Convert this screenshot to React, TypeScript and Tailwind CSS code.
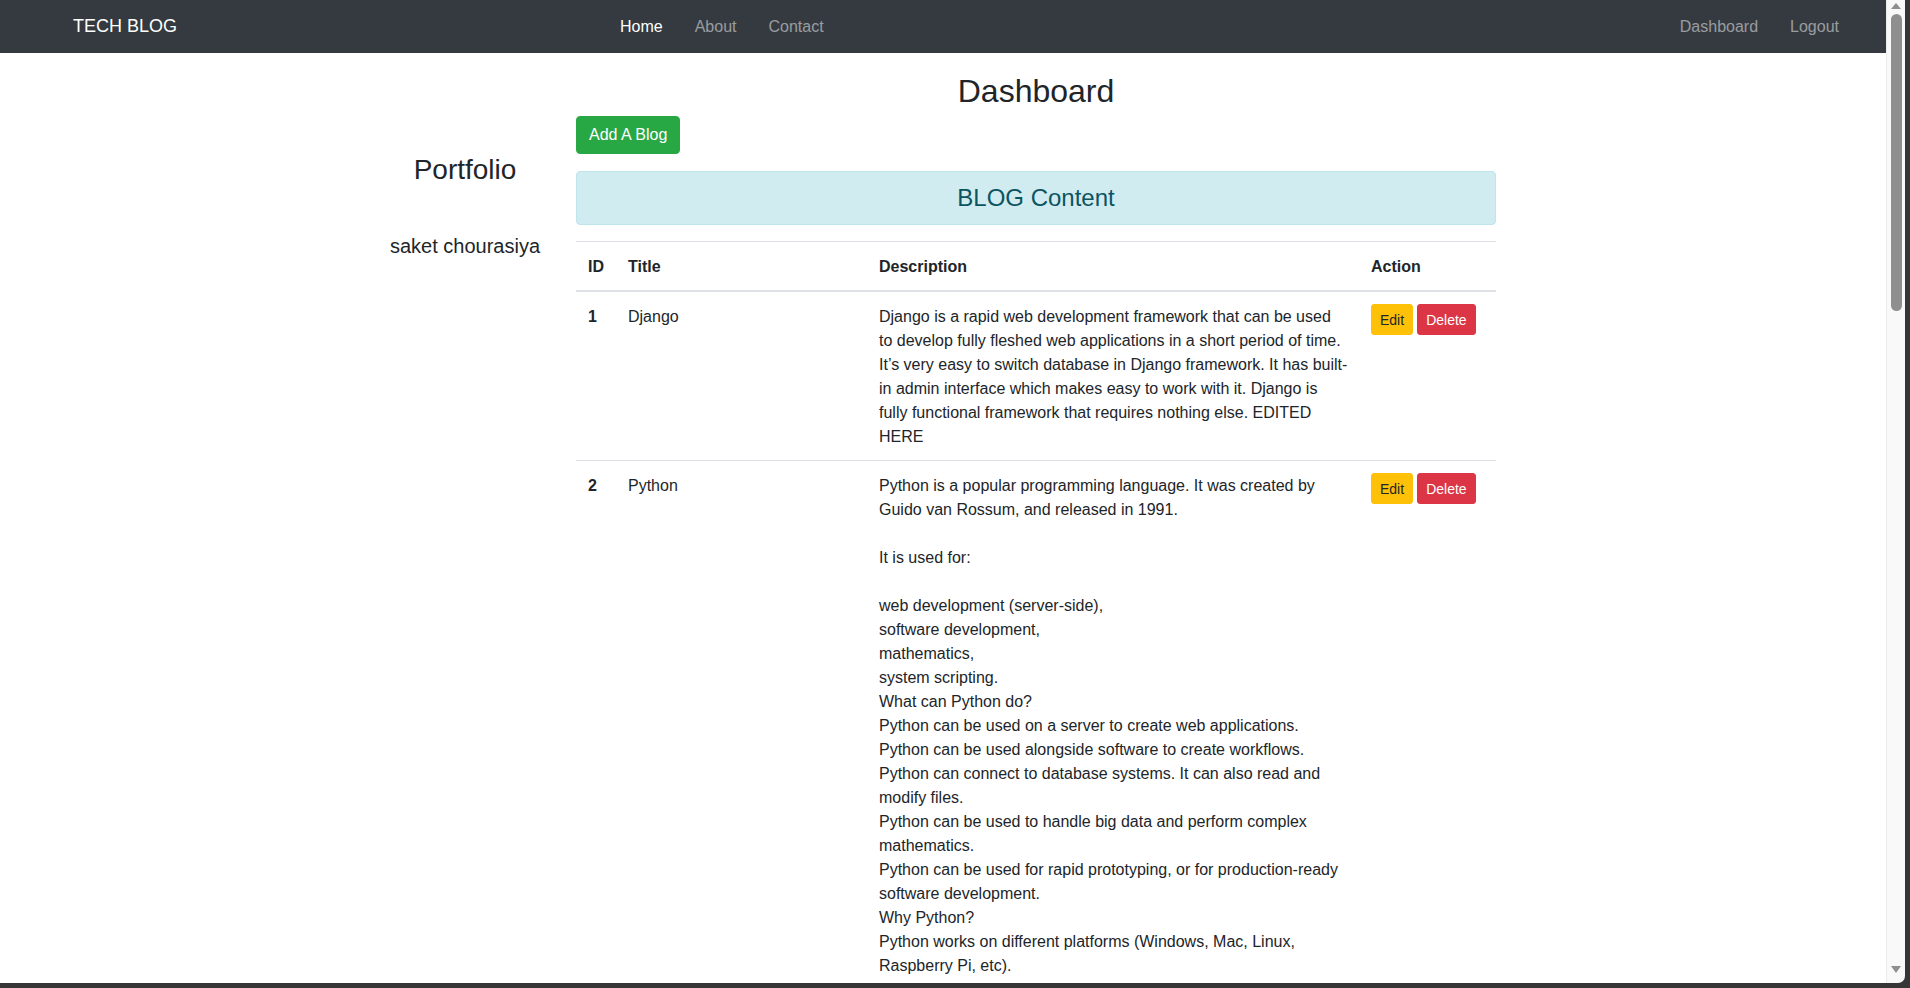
const djangoLines = [
  "Django is a rapid web development framework that can be used",
  "to develop fully fleshed web applications in a short period of time.",
  "It\u2019s very easy to switch database in Django framework. It has built-",
  "in admin interface which makes easy to work with it. Django is",
  "fully functional framework that requires nothing else. EDITED",
  "HERE",
];

const pythonLines = [
  "Python is a popular programming language. It was created by",
  "Guido van Rossum, and released in 1991.",
  "",
  "It is used for:",
  "",
  "web development (server-side),",
  "software development,",
  "mathematics,",
  "system scripting.",
  "What can Python do?",
  "Python can be used on a server to create web applications.",
  "Python can be used alongside software to create workflows.",
  "Python can connect to database systems. It can also read and",
  "modify files.",
  "Python can be used to handle big data and perform complex",
  "mathematics.",
  "Python can be used for rapid prototyping, or for production-ready",
  "software development.",
  "Why Python?",
  "Python works on different platforms (Windows, Mac, Linux,",
  "Raspberry Pi, etc).",
  "Python has a simple syntax similar to the English language.",
];

const blogs = [
  { id: 1, title: "Django", lines: djangoLines },
  { id: 2, title: "Python", lines: pythonLines },
];

function Navbar() {
  return (
    <nav className="h-[53px] shrink-0 bg-[#343a40] flex items-center pl-[73px] pr-[47px] text-[16px]">
      <span className="text-white text-[18px] w-[103px] whitespace-nowrap">TECH BLOG</span>
      <div className="flex items-center gap-8 ml-[444px]">
        <span className="text-white">Home</span>
        <span className="text-white/50">About</span>
        <span className="text-white/50">Contact</span>
      </div>
      <div className="flex items-center gap-8 ml-auto">
        <span className="text-white/50">Dashboard</span>
        <span className="text-white/50">Logout</span>
      </div>
    </nav>
  );
}

function Scrollbar() {
  return (
    <div className="w-[19px] shrink-0 bg-[#f9f9f9] border-l border-[#ececec] rounded-br-[7px] flex flex-col items-center">
      <svg className="mt-[3px]" width="10" height="6" viewBox="0 0 10 6">
        <path d="M5 0 L10 6 L0 6 Z" fill="#8f8f8f" />
      </svg>
      <div className="mt-[5px] w-[11px] h-[297px] rounded-full bg-[#8f8f8f]" />
      <div className="flex-1" />
      <svg className="mb-[10px]" width="10" height="7" viewBox="0 0 10 7">
        <path d="M0 0 L10 0 L5 7 Z" fill="#8f8f8f" />
      </svg>
    </div>
  );
}

export default function App() {
  return (
    <div className="h-[988px] w-full overflow-hidden bg-[#363636] font-['Liberation_Sans',Arial,sans-serif] text-[#212529]">
      <div className="h-[983px] mr-[5px] flex">
        <div className="flex-1 min-w-0 bg-white flex flex-col overflow-hidden">
          <Navbar />
          <div className="flex">
            {/* Sidebar */}
            <div className="w-[190px] ml-[370px] text-center pt-[100px]">
              <h3 className="text-[28px] leading-[1.2]">Portfolio</h3>
              <h5 className="text-[20px] leading-[1.2] mt-[47px]">saket chourasiya</h5>
            </div>

            {/* Main */}
            <div className="w-[920px] ml-[16px]">
              <h2 className="text-[32px] leading-[38px] text-center mt-[19px] mb-[6px]">Dashboard</h2>
              <button className="h-[38px] px-3 bg-[#28a745] border border-[#28a745] text-white text-[16px] rounded-[4px]">
                Add A Blog
              </button>
              <div className="mt-[17px] h-[54px] flex items-center justify-center bg-[#d1ecf1] border border-[#bee5eb] rounded-[4px] text-[#0c5460]">
                <h4 className="text-[24px] leading-[1.2]">BLOG Content</h4>
              </div>

              <table className="mt-4 w-full table-fixed border-collapse text-[16px] leading-6">
                <colgroup>
                  <col className="w-[40px]" />
                  <col className="w-[251px]" />
                  <col className="w-[492px]" />
                  <col className="w-[137px]" />
                </colgroup>
                <thead>
                  <tr className="border-t border-[#dee2e6] border-b-2">
                    <th className="px-3 pt-[13px] pb-[11px] text-left font-bold">ID</th>
                    <th className="px-3 pt-[13px] pb-[11px] text-left font-bold">Title</th>
                    <th className="px-3 pt-[13px] pb-[11px] text-left font-bold">Description</th>
                    <th className="px-3 pt-[13px] pb-[11px] text-left font-bold">Action</th>
                  </tr>
                </thead>
                <tbody>
                  {blogs.map((b) => (
                    <tr key={b.id} className="border-t border-[#dee2e6] align-top">
                      <td className="px-3 pt-[13px] pb-[11px] font-bold">{b.id}</td>
                      <td className="px-3 pt-[13px] pb-[11px]">{b.title}</td>
                      <td className="px-3 pt-[13px] pb-[11px]">
                        {b.lines.map((l, i) => (
                          <div key={i} className="whitespace-nowrap">
                            {l || "\u00a0"}
                          </div>
                        ))}
                      </td>
                      <td className="px-3 pt-3 pb-3">
                        <div className="flex gap-1">
                          <button className="h-[31px] px-2 text-[14px] bg-[#ffc107] border border-[#ffc107] text-[#212529] rounded-[3px]">
                            Edit
                          </button>
                          <button className="h-[31px] px-2 text-[14px] bg-[#dc3545] border border-[#dc3545] text-white rounded-[3px]">
                            Delete
                          </button>
                        </div>
                      </td>
                    </tr>
                  ))}
                </tbody>
              </table>
            </div>
          </div>
        </div>
        <Scrollbar />
      </div>
    </div>
  );
}
